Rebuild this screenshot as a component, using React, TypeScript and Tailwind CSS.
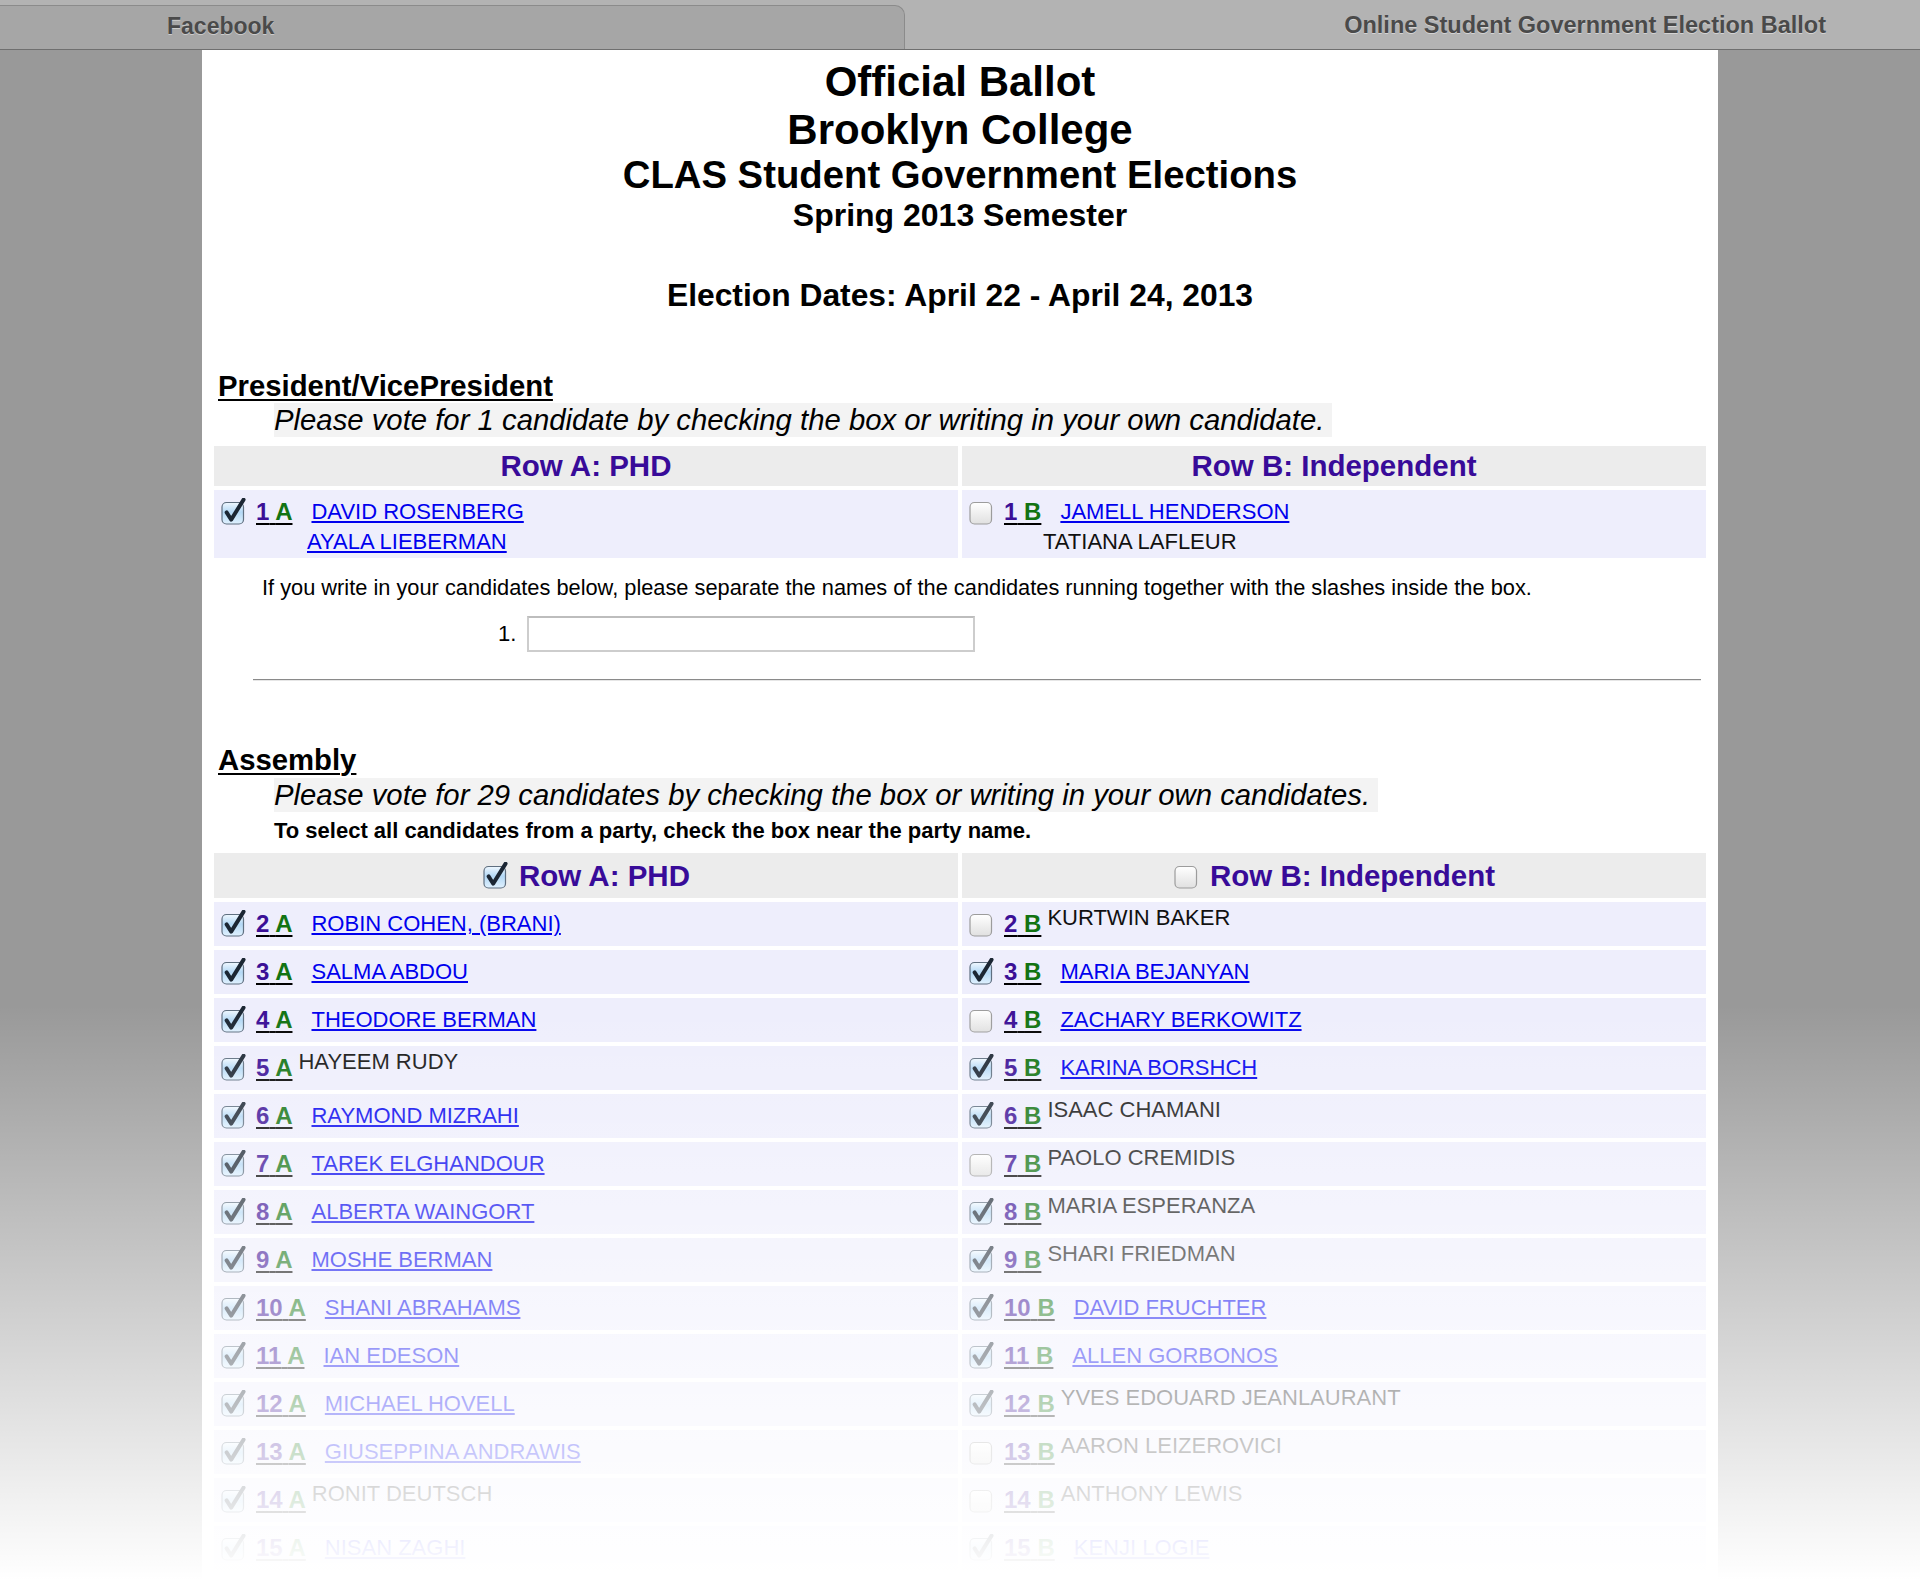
import { useId } from "react";

type Cand = { n: number; name: string; link: boolean; on: boolean };

const colA: Cand[] = [
  { n: 2, name: "ROBIN COHEN, (BRANI)", link: true, on: true },
  { n: 3, name: "SALMA ABDOU", link: true, on: true },
  { n: 4, name: "THEODORE BERMAN", link: true, on: true },
  { n: 5, name: "HAYEEM RUDY", link: false, on: true },
  { n: 6, name: "RAYMOND MIZRAHI", link: true, on: true },
  { n: 7, name: "TAREK ELGHANDOUR", link: true, on: true },
  { n: 8, name: "ALBERTA WAINGORT", link: true, on: true },
  { n: 9, name: "MOSHE BERMAN", link: true, on: true },
  { n: 10, name: "SHANI ABRAHAMS", link: true, on: true },
  { n: 11, name: "IAN EDESON", link: true, on: true },
  { n: 12, name: "MICHAEL HOVELL", link: true, on: true },
  { n: 13, name: "GIUSEPPINA ANDRAWIS", link: true, on: true },
  { n: 14, name: "RONIT DEUTSCH", link: false, on: true },
  { n: 15, name: "NISAN ZAGHI", link: true, on: true },
];

const colB: Cand[] = [
  { n: 2, name: "KURTWIN BAKER", link: false, on: false },
  { n: 3, name: "MARIA BEJANYAN", link: true, on: true },
  { n: 4, name: "ZACHARY BERKOWITZ", link: true, on: false },
  { n: 5, name: "KARINA BORSHCH", link: true, on: true },
  { n: 6, name: "ISAAC CHAMANI", link: false, on: true },
  { n: 7, name: "PAOLO CREMIDIS", link: false, on: false },
  { n: 8, name: "MARIA ESPERANZA", link: false, on: true },
  { n: 9, name: "SHARI FRIEDMAN", link: false, on: true },
  { n: 10, name: "DAVID FRUCHTER", link: true, on: true },
  { n: 11, name: "ALLEN GORBONOS", link: true, on: true },
  { n: 12, name: "YVES EDOUARD JEANLAURANT", link: false, on: true },
  { n: 13, name: "AARON LEIZEROVICI", link: false, on: false },
  { n: 14, name: "ANTHONY LEWIS", link: false, on: false },
  { n: 15, name: "KENJI LOGIE", link: true, on: true },
];

function Check({ on }: { on: boolean }) {
  const id = "cb" + useId().replace(/[^a-zA-Z0-9]/g, "");
  return (
    <svg width="28" height="28" viewBox="0 0 28 28" className="shrink-0">
      <defs>
        <linearGradient id={id} x1="0" y1="0" x2="0" y2="1">
          {on ? (
            <>
              <stop offset="0" stopColor="#f0f8ff" />
              <stop offset="0.45" stopColor="#b3d8f5" />
              <stop offset="1" stopColor="#e0f1fe" />
            </>
          ) : (
            <>
              <stop offset="0" stopColor="#ffffff" />
              <stop offset="1" stopColor="#e0e0e0" />
            </>
          )}
        </linearGradient>
      </defs>
      <rect x="2" y="4.5" width="21.5" height="21.5" rx="4.5" fill={`url(#${id})`} stroke={on ? "#5f6f80" : "#9c9c9c"} strokeWidth="1.2" />
      {on && (
        <path d="M6.6 14.4 L11.2 21.6 L23.6 1.6" fill="none" stroke="#1b2633" strokeWidth="3.9" strokeLinecap="round" strokeLinejoin="round" />
      )}
    </svg>
  );
}

function Num({ n, p }: { n: number; p: string }) {
  return (
    <span className="ml-[8px] shrink-0 text-[24px] leading-[28px] font-bold underline decoration-black decoration-2 underline-offset-[3px]">
      <span className="text-[#3b1096]">{n}</span> <span className="text-[#127312]">{p}</span>
    </span>
  );
}

function Name({ c }: { c: Cand }) {
  if (c.link) {
    return <a className="ml-[19px] text-[22px] leading-[26px] text-[#0000ee] underline whitespace-nowrap">{c.name}</a>;
  }
  return <span className="ml-[6px] mb-[12px] text-[22px] leading-[26px] text-[#111] whitespace-nowrap">{c.name}</span>;
}

function Row({ c, p }: { c: Cand; p: string }) {
  return (
    <div className="h-[44px] bg-[#eeeefc] flex items-center pl-[6px]">
      <Check on={c.on} />
      <Num n={c.n} p={p} />
      <Name c={c} />
    </div>
  );
}

function Head({ label, box, on, h }: { label: string; box?: boolean; on?: boolean; h: string }) {
  return (
    <div className={`${h} bg-[#ececec] flex items-center justify-center gap-[9px]`}>
      {box && <Check on={!!on} />}
      <span className="text-[29.5px] leading-[34px] font-bold text-[#380b99]">{label}</span>
    </div>
  );
}

function TabBar() {
  return (
    <div className="h-[50px] bg-[#b3b3b3] border-b border-[#6f6f6f] flex items-end text-[23px] font-bold text-[#4a4a4a] [text-shadow:0_1px_0_rgba(255,255,255,0.45)]">
      <div className="w-[905px] h-[44px] bg-[#a6a6a6] rounded-tr-[10px] border-t border-r border-[#8b8b8b] flex items-center pl-[167px] pb-[2px]">
        Facebook
      </div>
      <div className="flex-1 h-full flex items-center justify-end pr-[94px] pt-[2px] text-[23.5px]">
        Online Student Government Election Ballot
      </div>
    </div>
  );
}

export default function App() {
  return (
    <div className="relative h-[1580px] overflow-hidden bg-[#999999] font-['Liberation_Sans',Arial,sans-serif] text-black">
      <TabBar />
      <div className="mx-auto w-[1516px] min-h-[1530px] bg-white pb-[40px]">
        <div className="pt-[8px] text-center font-bold">
          <div className="text-[42px] leading-[48px]">Official Ballot</div>
          <div className="text-[42px] leading-[48px]">Brooklyn College</div>
          <div className="text-[38.3px] leading-[42px]">CLAS Student Government Elections</div>
          <div className="text-[32px] leading-[38px]">Spring 2013 Semester</div>
          <div className="mt-[42px] text-[31.8px] leading-[38px]">Election Dates: April 22 - April 24, 2013</div>
        </div>

        <div className="mt-[55px] pl-[16px] text-[29.3px] leading-[34px] font-bold underline decoration-2 underline-offset-[3px]">
          President/VicePresident
        </div>
        <div className="pl-[72px]">
          <span className="inline-block bg-[#f3f3f3] pr-[8px] text-[29.3px] leading-[34px] italic">
            Please vote for 1 candidate by checking the box or writing in your own candidate.
          </span>
        </div>

        <div className="mt-[9px] px-[12px] grid grid-cols-2 gap-[4px]">
          <Head label="Row A: PHD" h="h-[40px]" />
          <Head label="Row B: Independent" h="h-[40px]" />
          <div className="h-[68px] bg-[#eeeefc] pl-[6px] pt-[7px]">
            <div className="h-[30px] flex items-center">
              <Check on />
              <Num n={1} p="A" />
              <a className="ml-[19px] text-[22px] leading-[26px] text-[#0000ee] underline">DAVID ROSENBERG</a>
            </div>
            <div className="h-[30px] flex items-center pl-[87px]">
              <a className="text-[22px] leading-[26px] text-[#0000ee] underline">AYALA LIEBERMAN</a>
            </div>
          </div>
          <div className="h-[68px] bg-[#eeeefc] pl-[6px] pt-[7px]">
            <div className="h-[30px] flex items-center">
              <Check on={false} />
              <Num n={1} p="B" />
              <a className="ml-[19px] text-[22px] leading-[26px] text-[#0000ee] underline">JAMELL HENDERSON</a>
            </div>
            <div className="h-[30px] flex items-center pl-[75px]">
              <span className="text-[22px] leading-[26px] text-[#111]">TATIANA LAFLEUR</span>
            </div>
          </div>
        </div>

        <div className="mt-[17px] pl-[60px] text-[21.8px] leading-[26px]">
          If you write in your candidates below, please separate the names of the candidates running together with the slashes inside the box.
        </div>
        <div className="mt-[15px] pl-[296px] flex items-center">
          <span className="text-[22px] leading-[26px]">1.</span>
          <div className="ml-[11px] w-[448px] h-[36px] border-2 border-[#cdcdcd] border-t-[#bdbdbd] bg-white" />
        </div>

        <div className="mt-[27px] ml-[51px] mr-[17px] border-t border-[#8a8a8a] border-b border-b-[#e6e6e6]" />

        <div className="mt-[62px] pl-[16px] text-[29.3px] leading-[34px] font-bold underline decoration-2 underline-offset-[3px]">
          Assembly
        </div>
        <div className="mt-[1px] pl-[72px]">
          <span className="inline-block bg-[#f3f3f3] pr-[8px] text-[29.3px] leading-[34px] italic">
            Please vote for 29 candidates by checking the box or writing in your own candidates.
          </span>
        </div>
        <div className="mt-[7px] pl-[72px] text-[22px] leading-[24px] font-bold">
          To select all candidates from a party, check the box near the party name.
        </div>

        <div className="mt-[10px] px-[12px] grid grid-cols-2 gap-[4px]">
          <Head label="Row A: PHD" box on h="h-[45px]" />
          <Head label="Row B: Independent" box on={false} h="h-[45px]" />
          {colA.map((a, i) => (
            <div key={a.n} className="contents">
              <Row c={a} p="A" />
              <Row c={colB[i]} p="B" />
            </div>
          ))}
        </div>
      </div>
      <div className="pointer-events-none absolute left-0 right-0 top-[1005px] h-[575px] bg-linear-to-b from-white/0 to-white" />
    </div>
  );
}
